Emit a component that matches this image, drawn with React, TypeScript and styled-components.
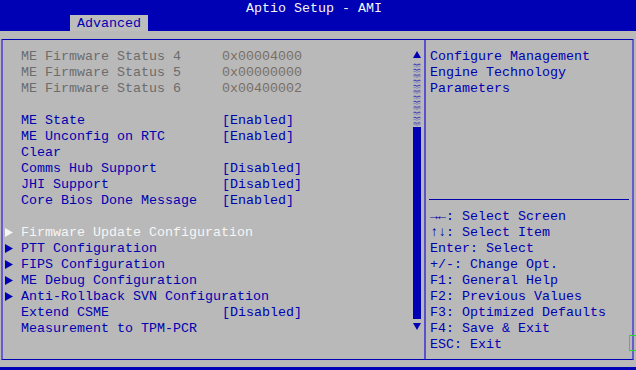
import React from 'react';
import styled, { createGlobalStyle } from 'styled-components';

const GlobalStyle = createGlobalStyle`
  html, body { margin: 0; padding: 0; background: #b9b9b9; }
  #root { width: 636px; height: 370px; }
`;

const BLUE = '#0000b4';
const TEXT_BLUE = '#0000b0';
const FRAME = '#6a5ad0';

const Screen = styled.div`
  position: relative;
  width: 636px;
  height: 370px;
  overflow: hidden;
  background: #b9b9b9;
  display: flex;
  flex-direction: column;
  font-family: 'Liberation Mono', 'DejaVu Sans Mono', monospace;
  font-size: 13.33px;
  line-height: 19px;
`;

const Header = styled.header`
  height: 31px;
  background: ${BLUE};
  display: flex;
  flex-direction: column;
`;

const Title = styled.div`
  height: 15px;
  line-height: 17px;
  color: #f4f4f4;
  text-align: center;
  padding-right: 8px;
  white-space: pre;
`;

const TabRow = styled.div`
  height: 16px;
  display: flex;
  padding-left: 70px;
`;

const Tab = styled.div`
  height: 16px;
  line-height: 18px;
  padding: 0 7px;
  width: 64px;
  background: #bdbdbd;
  color: ${TEXT_BLUE};
  overflow: hidden;
`;

const Frame = styled.main`
  margin: 8px 2px 0 1px;
  height: 319px;
  border-top: 1px solid ${BLUE};
  border-bottom: 1px solid ${BLUE};
  border-left: 2px solid ${FRAME};
  border-right: 2px solid ${FRAME};
  display: grid;
  grid-template-columns: 421px 2px 1fr;
`;

const LeftPanel = styled.section`
  display: grid;
  grid-template-columns: 1fr 8px;
  padding: 7px 3px 0 0;
`;

const List = styled.div`
  display: flex;
  flex-direction: column;
`;

const Row = styled.div<{ $tone: 'info' | 'item' | 'selected' }>`
  height: 16px;
  display: grid;
  grid-template-columns: 16px 201px 1fr;
  padding-left: 2px;
  white-space: pre;
  color: ${(p) =>
    p.$tone === 'info' ? '#6c6c6c' : p.$tone === 'selected' ? '#f6f6f6' : TEXT_BLUE};
`;

const Marker = styled.span`
  height: 16px;
  display: flex;
  align-items: center;
  padding-top: 2px;
  box-sizing: border-box;
`;

const Value = styled.span<{ $info?: boolean }>`
  color: ${(p) => (p.$info ? '#7a6e62' : 'inherit')};
`;

const Scrollbar = styled.div`
  display: flex;
  flex-direction: column;
  width: 8px;
`;

const ArrowCell = styled.div`
  height: 16px;
  display: flex;
  align-items: flex-start;
  padding-top: 4px;
  box-sizing: border-box;
`;

const Track = styled.div`
  height: 64px;
  display: flex;
`;

const Thumb = styled.div`
  height: 192px;
  background: ${BLUE};
`;

const Divider = styled.div`
  background: #5a50cc;
`;

const RightPanel = styled.aside`
  display: flex;
  flex-direction: column;
  padding: 7px 0 8px 4px;
  color: ${TEXT_BLUE};
  white-space: pre;
`;

const Description = styled.div`
  flex: 1;
  display: flex;
  flex-direction: column;
`;

const Separator = styled.div`
  height: 1px;
  background: ${TEXT_BLUE};
  margin: 0 3px 7px -1px;
`;

const TextLine = styled.div`
  height: 16px;
`;

const BottomGap = styled.div`
  height: 7px;
`;

const BottomBar = styled.footer`
  height: 3px;
  background: ${BLUE};
`;

const GreenMark = styled.div`
  position: absolute;
  left: 629px;
  top: 335px;
  width: 10px;
  height: 14px;
  border: 1px solid #22e022;
`;

type RowData =
  | { blank: true }
  | { blank?: false; label: string; value?: string; tone: 'info' | 'item' | 'selected'; submenu?: boolean };

const rows: RowData[] = [
  { label: 'ME Firmware Status 4', value: '0x00004000', tone: 'info' },
  { label: 'ME Firmware Status 5', value: '0x00000000', tone: 'info' },
  { label: 'ME Firmware Status 6', value: '0x00400002', tone: 'info' },
  { blank: true },
  { label: 'ME State', value: '[Enabled]', tone: 'item' },
  { label: 'ME Unconfig on RTC', value: '[Enabled]', tone: 'item' },
  { label: 'Clear', tone: 'item' },
  { label: 'Comms Hub Support', value: '[Disabled]', tone: 'item' },
  { label: 'JHI Support', value: '[Disabled]', tone: 'item' },
  { label: 'Core Bios Done Message', value: '[Enabled]', tone: 'item' },
  { blank: true },
  { label: 'Firmware Update Configuration', tone: 'selected', submenu: true },
  { label: 'PTT Configuration', tone: 'item', submenu: true },
  { label: 'FIPS Configuration', tone: 'item', submenu: true },
  { label: 'ME Debug Configuration', tone: 'item', submenu: true },
  { label: 'Anti-Rollback SVN Configuration', tone: 'item', submenu: true },
  { label: 'Extend CSME', value: '[Disabled]', tone: 'item' },
  { label: 'Measurement to TPM-PCR', tone: 'item' },
];

const description = ['Configure Management', 'Engine Technology', 'Parameters'];

const help = [
  '\u2192\u2190: Select Screen',
  '\u2191\u2193: Select Item',
  'Enter: Select',
  '+/-: Change Opt.',
  'F1: General Help',
  'F2: Previous Values',
  'F3: Optimized Defaults',
  'F4: Save & Exit',
  'ESC: Exit',
];

const SubmenuArrow = ({ color }: { color: string }) => (
  <svg width="8" height="9" viewBox="0 0 8 9">
    <path d="M0 0 L8 4.5 L0 9 Z" fill={color} />
  </svg>
);

const Triangle = ({ down }: { down?: boolean }) => (
  <svg width="8" height="7" viewBox="0 0 8 7">
    <path d={down ? 'M0 0 H8 L4 7 Z' : 'M4 0 L8 7 H0 Z'} fill={BLUE} />
  </svg>
);

const TrackPattern = () => (
  <svg width="8" height="64" viewBox="0 0 8 64">
    <defs>
      <pattern id="trk" width="8" height="5.33" patternUnits="userSpaceOnUse">
        <path d="M0.5 1.5 L2 1 L4 2 L6 1 L7.5 1.5" stroke={BLUE} strokeWidth="0.8" fill="none" />
        <path d="M0.5 3.5 L2 3 L4 4 L6 3 L7.5 3.5" stroke={BLUE} strokeWidth="0.6" fill="none" opacity="0.5" />
      </pattern>
    </defs>
    <rect width="8" height="64" fill="url(#trk)" />
  </svg>
);

export default function App() {
  return (
    <Screen>
      <GlobalStyle />
      <Header>
        <Title>Aptio Setup - AMI</Title>
        <TabRow>
          <Tab>Advanced</Tab>
        </TabRow>
      </Header>
      <Frame>
        <LeftPanel>
          <List>
            {rows.map((r, i) =>
              r.blank ? (
                <Row key={i} $tone="item" />
              ) : (
                <Row key={i} $tone={r.tone}>
                  <Marker>
                    {r.submenu && (
                      <SubmenuArrow color={r.tone === 'selected' ? '#f6f6f6' : TEXT_BLUE} />
                    )}
                  </Marker>
                  <span>{r.label}</span>
                  <Value $info={r.tone === 'info'}>{r.value ?? ''}</Value>
                </Row>
              )
            )}
          </List>
          <Scrollbar>
            <ArrowCell>
              <Triangle />
            </ArrowCell>
            <Track>
              <TrackPattern />
            </Track>
            <Thumb />
            <ArrowCell>
              <Triangle down />
            </ArrowCell>
          </Scrollbar>
        </LeftPanel>
        <Divider />
        <RightPanel>
          <Description>
            {description.map((d) => (
              <TextLine key={d}>{d}</TextLine>
            ))}
          </Description>
          <Separator />
          {help.map((h) => (
            <TextLine key={h}>{h}</TextLine>
          ))}
        </RightPanel>
      </Frame>
      <BottomGap />
      <BottomBar />
      <GreenMark />
    </Screen>
  );
}
